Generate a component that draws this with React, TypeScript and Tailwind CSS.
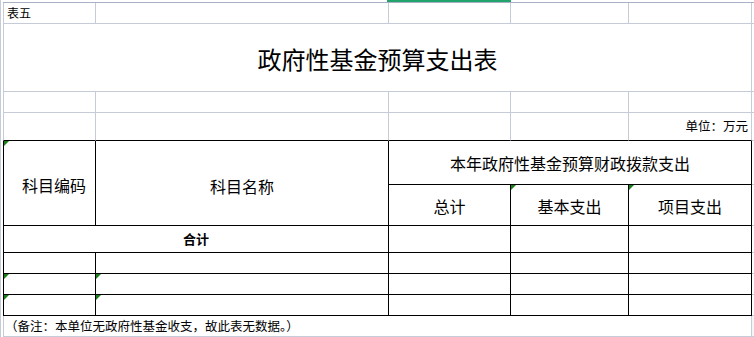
const font = "font-['Noto_Sans_CJK_SC','Noto_Sans',sans-serif]";

function Mark() {
  return <div className="absolute left-0 top-0 w-[5px] h-[5px] bg-[#1a7f1a] [clip-path:polygon(0_0,100%_0,0_100%)]" />;
}

// light grid cell
const L = "border-r border-b border-[#c6cbd8]";
// table cell with black lines
const B = "border-r border-b border-black";

export default function App() {
  return (
    <div className={`w-[754px] h-[337px] overflow-hidden bg-white border-l border-[#c6cbd8] pl-[2px] text-black ${font}`}>
      <div className="h-[2px] flex">
        <div className="ml-[384px] w-[124px] bg-[#21a36b]" />
      </div>
      <div className="grid grid-cols-[93px_293px_122px_118px_123px_2px] grid-rows-[21px_68px_21px_28px_44px_41px_27px_21px_21px_21px_21px] border-t border-[#a9b1c5]">
        {/* row 1 */}
        <div className={`${L} border-l flex items-center pl-[3px] text-[12px]`}>表五</div>
        <div className={L} />
        <div className={L} />
        <div className={L} />
        <div className={L} />
        <div className="border-b border-[#c6cbd8]" />

        {/* title */}
        <div className={`${L} border-l col-span-5 flex items-center justify-center pt-[3px] text-[24px] tracking-[0px]`}>
          政府性基金预算支出表
        </div>
        <div className="border-b border-[#c6cbd8]" />

        {/* row 3 */}
        <div className={`${L} border-l`} />
        <div className={L} />
        <div className={L} />
        <div className={L} />
        <div className={L} />
        <div className="border-b border-[#c6cbd8]" />

        {/* row 4 */}
        <div className={`${L} border-l border-b-black`} />
        <div className={`${L} border-b-black`} />
        <div className={`${L} border-b-black`} />
        <div className={`${L} border-b-black`} />
        <div className={`${L} border-b-black flex items-center justify-end pr-[3px] text-[12.5px]`}>单位：万元</div>
        <div className="border-b border-[#c6cbd8]" />

        {/* header */}
        <div className={`${B} border-l row-span-2 relative flex items-center justify-center pl-[9px] pt-[3px] text-[16px]`}>
          <Mark />
          科目编码
        </div>
        <div className={`${B} row-span-2 flex items-center justify-center pt-[5px] text-[16px]`}>科目名称</div>
        <div className={`${B} col-span-3 flex items-center justify-center pt-[1px] text-[16px]`}>本年政府性基金预算财政拨款支出</div>
        <div className="border-b border-[#c6cbd8]" />
        <div className={`${B} flex items-center justify-center pt-[1px] text-[16px]`}>总计</div>
        <div className={`${B} relative flex items-center justify-center pt-[1px] text-[16px]`}>
          <Mark />
          基本支出
        </div>
        <div className={`${B} relative flex items-center justify-center pt-[1px] text-[16px]`}>
          <Mark />
          项目支出
        </div>
        <div className="border-b border-[#c6cbd8]" />

        {/* 合计 */}
        <div className={`${B} border-l col-span-2 flex items-center justify-center text-[13px] font-bold`}>合计</div>
        <div className={B} />
        <div className={B} />
        <div className={B} />
        <div className="border-b border-[#c6cbd8]" />

        {/* data rows */}
        {[false, true, true].map((m, i) => (
          <div key={i} className="contents">
            <div className={`${B} border-l relative`}>{m && <Mark />}</div>
            <div className={`${B} relative`}>{m && <Mark />}</div>
            <div className={B} />
            <div className={B} />
            <div className={B} />
            <div className="border-b border-[#c6cbd8]" />
          </div>
        ))}

        {/* note */}
        <div className={`${L} border-l col-span-5 flex items-center pl-[1px] text-[12.5px]`}>
          （备注：本单位无政府性基金收支，故此表无数据。）
        </div>
        <div className="border-b border-[#c6cbd8] bg-[#f4f5f8]" />
      </div>
    </div>
  );
}
